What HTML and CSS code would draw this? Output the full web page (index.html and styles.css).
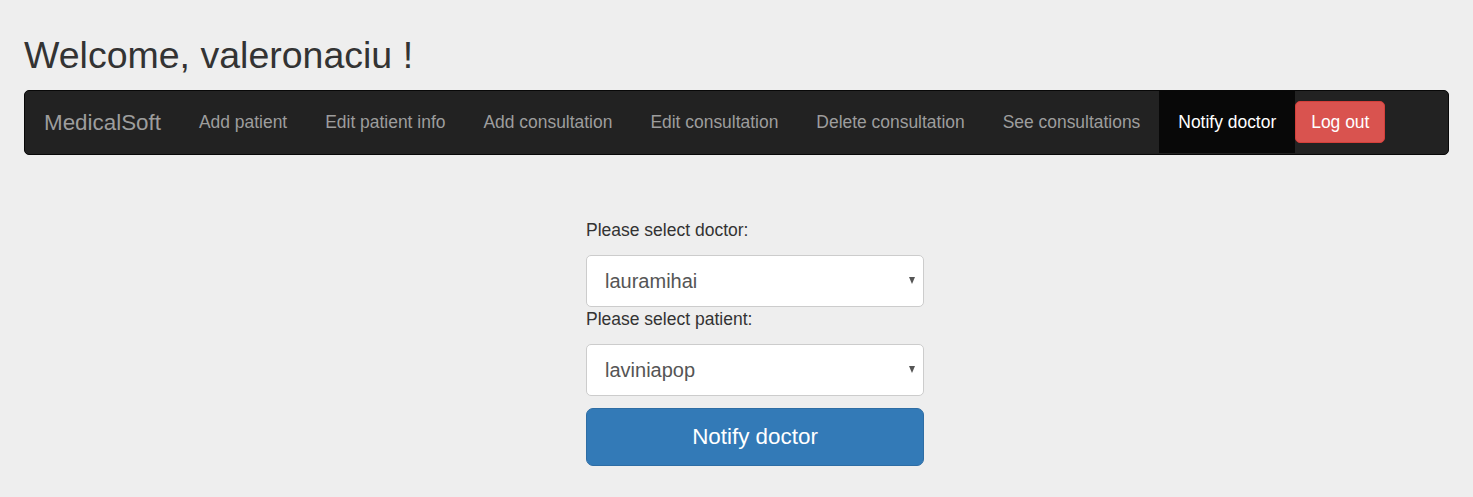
FILE: index.html
```html
<!DOCTYPE html>
<html lang="en">
<head>
<meta charset="utf-8">
<title>MedicalSoft</title>
<link rel="stylesheet" href="styles.css">
</head>
<body>
<div class="page">
  <h1 class="welcome">Welcome, valeronaciu !</h1>
  <nav class="navbar">
    <span class="brand">MedicalSoft</span>
    <ul class="nav">
      <li><a href="#">Add patient</a></li>
      <li><a href="#">Edit patient info</a></li>
      <li><a href="#">Add consultation</a></li>
      <li><a href="#">Edit consultation</a></li>
      <li><a href="#">Delete consultation</a></li>
      <li><a href="#">See consultations</a></li>
      <li class="active"><a href="#">Notify doctor</a></li>
    </ul>
    <button class="btn-logout" type="button">Log out</button>
  </nav>
  <form class="notify-form">
    <label class="field-label" for="doctor">Please select doctor:</label>
    <div class="select-wrap">
      <select id="doctor" class="select"><option>lauramihai</option></select>
      <span class="caret"></span>
    </div>
    <label class="field-label" for="patient">Please select patient:</label>
    <div class="select-wrap">
      <select id="patient" class="select"><option>laviniapop</option></select>
      <span class="caret"></span>
    </div>
    <button class="btn-primary" type="button">Notify doctor</button>
  </form>
</div>
</body>
</html>
```
FILE: styles.css
```css
* { box-sizing: border-box; }
html, body {
  margin: 0;
  padding: 0;
  background: #eeeeee;
  font-family: "Liberation Sans", Arial, sans-serif;
  color: #333;
}
.page {
  padding: 0 24px;
}
.welcome {
  margin: 0;
  padding-top: 33px;
  font-size: 37.5px;
  font-weight: 400;
  line-height: 44px;
  color: #333;
  height: 90px;
}
.navbar {
  display: flex;
  align-items: flex-start;
  height: 65px;
  background: #222;
  border: 1px solid #080808;
  border-radius: 5px;
}
.brand {
  font-size: 22.4px;
  line-height: 63px;
  padding: 0 19px;
  color: #9d9d9d;
}
.nav {
  display: flex;
  list-style: none;
  margin: 0;
  padding: 0;
}
.nav a {
  display: block;
  padding: 0 19px;
  height: 62px;
  line-height: 62px;
  font-size: 17.45px;
  color: #9d9d9d;
  text-decoration: none;
}
.nav .active a {
  background: #080808;
  color: #fff;
}
.btn-logout {
  margin-top: 10px;
  height: 42px;
  padding: 0 15px;
  font-family: inherit;
  font-size: 17.45px;
  color: #fff;
  background: #d9534f;
  border: 1px solid #d43f3a;
  border-radius: 5px;
}
.notify-form {
  width: 338px;
  margin: 63px 0 0 calc(50% - 150.5px);
  display: flex;
  flex-direction: column;
}
.field-label {
  display: block;
  font-size: 17.5px;
  line-height: 25px;
  height: 25px;
  margin-bottom: 12px;
  color: #333;
}
.select-wrap {
  position: relative;
}
.select {
  display: block;
  width: 100%;
  height: 52px;
  padding: 0 18px;
  font-family: inherit;
  font-size: 20px;
  color: #555;
  background: #fff;
  border: 1px solid #ccc;
  border-radius: 5px;
  -webkit-appearance: none;
  appearance: none;
  outline: none;
}
.caret {
  position: absolute;
  right: 9px;
  top: 22px;
  width: 0;
  height: 0;
  border-left: 3.5px solid transparent;
  border-right: 3.5px solid transparent;
  border-top: 7px solid #555;
}
.btn-primary {
  margin-top: 12px;
  height: 58px;
  font-family: inherit;
  font-size: 22.4px;
  color: #fff;
  background: #337ab7;
  border: 1px solid #2e6da4;
  border-radius: 7px;
}
```
